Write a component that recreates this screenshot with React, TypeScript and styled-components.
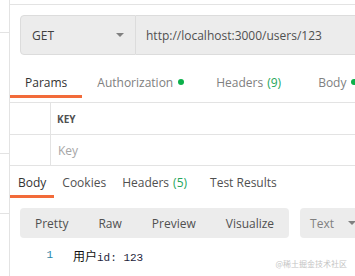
import styled, { createGlobalStyle } from "styled-components";

const GlobalStyle = createGlobalStyle`
  html, body {
    margin: 0;
    padding: 0;
    background: #fff;
  }
  body {
    font-family: "Open Sans", "Noto Sans", sans-serif;
    font-size: 12px;
    color: #505050;
  }
`;

const line = "#e3e3e3";

const Page = styled.div`
  position: relative;
  display: flex;
  width: 355px;
  height: 276px;
  overflow: hidden;
  background: #fff;
`;

const Gutter = styled.div`
  width: 9px;
  flex: none;
  border-right: 1px solid ${line};
`;

const GutterCell = styled.div<{ $h: number }>`
  height: ${({ $h }) => $h}px;
  border-bottom: 1px solid ${line};
`;

const Main = styled.div`
  flex: 1;
  min-width: 0;
  display: flex;
  flex-direction: column;
  overflow: hidden;
  white-space: nowrap;
`;

const TopStrip = styled.div`
  height: 4px;
  border-bottom: 1px solid ${line};
`;

const RequestBar = styled.div`
  display: flex;
  margin: 10px 0 0 10px;
  height: 40px;
`;

const MethodSelect = styled.div`
  box-sizing: border-box;
  width: 116px;
  flex: none;
  display: flex;
  align-items: center;
  justify-content: space-between;
  padding: 0 11px 0 11px;
  background: #ececec;
  border: 1px solid #dcdcdc;
  border-radius: 4px 0 0 4px;
  color: #404040;
  font-size: 12px;
`;

const Caret = styled.span<{ $size?: number }>`
  width: 0;
  height: 0;
  border-left: ${({ $size = 4 }) => $size}px solid transparent;
  border-right: ${({ $size = 4 }) => $size}px solid transparent;
  border-top: ${({ $size = 4 }) => $size}px solid #808080;
`;

const UrlInput = styled.div`
  box-sizing: border-box;
  flex: 1;
  min-width: 260px;
  display: flex;
  align-items: center;
  padding-left: 10px;
  background: #ececec;
  border: 1px solid #dcdcdc;
  border-left: none;
  color: #505050;
  font-size: 12px;
`;

const TabBar = styled.div<{ $top: number }>`
  display: flex;
  margin-top: ${({ $top }) => $top}px;
`;

const Tab = styled.div<{ $active?: boolean; $pad: number; $tone?: string }>`
  display: flex;
  align-items: center;
  height: 26px;
  padding: 0 ${({ $pad }) => $pad}px;
  border-bottom: 3px solid ${({ $active }) => ($active ? "#f26b3a" : "transparent")};
  color: ${({ $active, $tone }) => ($active ? "#333" : $tone ?? "#808080")};
  font-size: 12px;
`;

const Count = styled.span`
  color: #26a65b;
  margin-left: 4px;
  margin-right: 7px;
`;

const Dot = styled.span`
  width: 6px;
  height: 6px;
  border-radius: 50%;
  background: #0cb04a;
  margin: 0 2px 0 5px;
  flex: none;
`;

const ParamsTable = styled.div`
  margin-top: 4px;
  border-top: 1px solid ${line};
`;

const TableRow = styled.div<{ $h: number }>`
  display: flex;
  height: ${({ $h }) => $h}px;
  border-bottom: 1px solid ${line};
`;

const IndexCell = styled.div`
  width: 40px;
  flex: none;
  border-right: 1px solid ${line};
`;

const HeadCell = styled.div`
  display: flex;
  align-items: center;
  padding-left: 6px;
  font-size: 10px;
  font-weight: 700;
  color: #505050;
`;

const KeyCell = styled.div`
  display: flex;
  align-items: center;
  padding-left: 7px;
  font-size: 12px;
  color: #a6a6a6;
`;

const ResponseToolbar = styled.div`
  display: flex;
  gap: 11px;
  margin: 10px 0 0 10px;
  height: 30px;
`;

const Segmented = styled.div`
  display: flex;
  background: #ececec;
  border-radius: 4px;
`;

const Segment = styled.div`
  display: flex;
  align-items: center;
  padding: 0 15px;
  color: #505050;
  font-size: 12px;
`;

const FormatSelect = styled.div`
  box-sizing: border-box;
  min-width: 70px;
  display: flex;
  align-items: center;
  gap: 14px;
  padding-left: 10px;
  background: #ececec;
  border-radius: 4px;
  color: #808080;
  font-size: 12px;
`;

const CodeLine = styled.div`
  display: flex;
  align-items: center;
  margin: 8px 0 0 10px;
  height: 18px;
  font-family: "Liberation Mono", "Noto Sans CJK SC", monospace;
  font-size: 11px;
`;

const LineNo = styled.span`
  width: 33px;
  text-align: right;
  color: #2a86a8;
`;

const Code = styled.span`
  margin-left: 20px;
  color: #1e1e3c;
`;

const Han = styled.span`
  font-family: "Noto Sans CJK SC", sans-serif;
  font-size: 12px;
  color: #111;
`;

const Watermark = styled.div`
  position: absolute;
  right: 8px;
  bottom: 7px;
  font-family: "Noto Sans CJK SC", sans-serif;
  font-size: 8px;
  color: #c4c4c4;
`;

export default function App() {
  return (
    <>
      <GlobalStyle />
      <Page>
        <Gutter>
          <GutterCell $h={32} />
          <GutterCell $h={120} />
          <GutterCell $h={59} />
        </Gutter>
        <Main>
          <TopStrip />
          <RequestBar>
            <MethodSelect>
              GET
              <Caret />
            </MethodSelect>
            <UrlInput>http://localhost:3000/users/123</UrlInput>
          </RequestBar>

          <TabBar $top={14}>
            <Tab $active $pad={15}>Params</Tab>
            <Tab $pad={15}>
              Authorization
              <Dot />
            </Tab>
            <Tab $pad={15}>
              Headers<Count>(9)</Count>
            </Tab>
            <Tab $pad={15}>
              Body
              <Dot />
            </Tab>
          </TabBar>

          <ParamsTable>
            <TableRow $h={31}>
              <IndexCell />
              <HeadCell>KEY</HeadCell>
            </TableRow>
            <TableRow $h={30}>
              <IndexCell />
              <KeyCell>Key</KeyCell>
            </TableRow>
          </ParamsTable>

          <TabBar $top={3}>
            <Tab $active $pad={8}>Body</Tab>
            <Tab $pad={8} $tone="#505050">Cookies</Tab>
            <Tab $pad={8} $tone="#505050">
              Headers<Count>(5)</Count>
            </Tab>
            <Tab $pad={8} $tone="#505050">Test Results</Tab>
          </TabBar>

          <ResponseToolbar>
            <Segmented>
              <Segment>Pretty</Segment>
              <Segment>Raw</Segment>
              <Segment>Preview</Segment>
              <Segment>Visualize</Segment>
            </Segmented>
            <FormatSelect>
              Text
              <Caret />
            </FormatSelect>
          </ResponseToolbar>

          <CodeLine>
            <LineNo>1</LineNo>
            <Code>
              <Han>用户</Han>id: 123
            </Code>
          </CodeLine>
        </Main>
        <Watermark>@稀土掘金技术社区</Watermark>
      </Page>
    </>
  );
}
